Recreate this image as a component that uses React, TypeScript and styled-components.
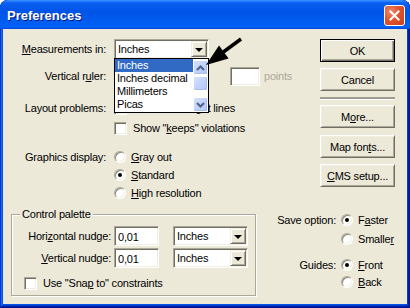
import React from "react";
import styled, { createGlobalStyle } from "styled-components";

const GlobalStyle = createGlobalStyle`
  html, body { margin: 0; padding: 0; background: #ffffff; }
  body { font-family: "Liberation Sans", Arial, sans-serif; font-size: 11px; letter-spacing: -0.2px; color: #000; }
  #root { width: 410px; height: 308px; }
`;

const Window = styled.div`
  width: 410px;
  height: 308px;
  box-sizing: border-box;
  display: flex;
  flex-direction: column;
  background: #0855dd;
  border-radius: 8px 8px 0 0;
  overflow: hidden;
  box-shadow: inset -1px -1px #00138c, inset 1px 1px #0831d9, inset -2px -2px #001ea0,
    inset 2px 2px #166aee, inset -3px -3px #003bda, inset 3px 3px #0855dd;
`;

const TitleBar = styled.div`
  height: 29px;
  flex: none;
  display: flex;
  align-items: center;
  justify-content: space-between;
  padding: 1px 5px 0 7px;
  box-sizing: border-box;
  border-radius: 8px 8px 0 0;
  background: linear-gradient(
    180deg,
    #3d95ff 0%,
    #0a5ff2 10%,
    #0054e6 40%,
    #005ff4 85%,
    #0062f8 93%,
    #0046d8 100%
  );
`;

const Title = styled.span`
  color: #fff;
  font-weight: bold;
  font-size: 13px;
  letter-spacing: 0;
  text-shadow: 1px 1px 0 #0a1883;
`;

const CloseButton = styled.div`
  width: 21px;
  height: 21px;
  box-sizing: border-box;
  border: 1px solid #fff;
  border-radius: 3px;
  display: flex;
  align-items: center;
  justify-content: center;
  background: radial-gradient(circle at 30% 30%, #eb8a6d 0%, #e0552f 45%, #c93d1a 100%);
`;

const Client = styled.div`
  flex: 1;
  margin: 0 3px 4px 3px;
  background: #ece9d8;
  position: relative;
  display: flex;
  flex-direction: column;
`;

const TopSection = styled.div`
  display: flex;
`;

const LeftForm = styled.div`
  flex: 1;
  display: flex;
  flex-direction: column;
`;

const FormRow = styled.div<{ $mt: number; $h: number }>`
  display: grid;
  grid-template-columns: 103px auto;
  column-gap: 8px;
  align-items: center;
  height: ${(p) => p.$h}px;
  margin-top: ${(p) => p.$mt}px;
`;

const FieldLabel = styled.span`
  text-align: right;
  white-space: nowrap;
`;

const Controls = styled.div`
  display: flex;
  align-items: center;
`;

const U = styled.span`
  text-decoration: underline;
`;

const sunken = `
  border: 1px solid;
  border-color: #aca899 #ffffff #ffffff #aca899;
  box-shadow: inset 1px 1px 0 #716f64, inset -1px -1px 0 #f1efe2;
`;

const Combo = styled.div<{ $w: number }>`
  position: relative;
  width: ${(p) => p.$w}px;
  height: 20px;
  box-sizing: border-box;
  ${sunken}
  background: #fff;
  display: flex;
  align-items: center;
  padding: 1px;
`;

const ComboText = styled.span`
  flex: 1;
  padding-left: 2px;
  white-space: nowrap;
`;

const DropButton = styled.span`
  width: 16px;
  height: 16px;
  box-sizing: border-box;
  background: #ece9d8;
  border: 1px solid;
  border-color: #f1efe2 #716f64 #716f64 #f1efe2;
  box-shadow: inset 1px 1px 0 #fff, inset -1px -1px 0 #aca899;
  display: flex;
  align-items: center;
  justify-content: center;
  &::after {
    content: "";
    width: 0;
    height: 0;
    border-left: 4px solid transparent;
    border-right: 4px solid transparent;
    border-top: 4px solid #000;
    margin-top: 1px;
  }
`;

const DropList = styled.div`
  position: absolute;
  left: -1px;
  top: 100%;
  width: 95px;
  height: 55px;
  box-sizing: border-box;
  border: 1px solid #000;
  background: #fff;
  display: flex;
  z-index: 2;
`;

const ListItems = styled.div`
  flex: 1;
  display: flex;
  flex-direction: column;
`;

const ListItem = styled.div<{ $sel?: boolean }>`
  height: 13px;
  line-height: 13px;
  padding-left: 2px;
  white-space: nowrap;
  background: ${(p) => (p.$sel ? "#316ac5" : "transparent")};
  color: ${(p) => (p.$sel ? "#fff" : "#000")};
`;

const ScrollBar = styled.div`
  width: 15px;
  flex: none;
  display: flex;
  flex-direction: column;
  justify-content: space-between;
  background: #fdfdfa;
`;

const ScrollPart = styled.div<{ $h: number }>`
  height: ${(p) => p.$h}px;
  box-sizing: border-box;
  border: 1px solid #fff;
  border-radius: 2px;
  background: linear-gradient(135deg, #d6e2fd 0%, #c2d3fb 50%, #b2c6f4 100%);
  box-shadow: inset -1px -1px 0 #a9bef0;
  display: flex;
  align-items: center;
  justify-content: center;
`;

const ScrollTrack = styled.div`
  flex: 1;
  display: flex;
  flex-direction: column;
  padding-top: 1px;
`;

const SunkenInput = styled.div<{ $w: number; $h: number }>`
  width: ${(p) => p.$w}px;
  height: ${(p) => p.$h}px;
  box-sizing: border-box;
  ${sunken}
  background: #fff;
  padding: 2px 0 0 3px;
  display: flex;
  align-items: center;
`;

const PointsBox = styled(SunkenInput)`
  margin-left: 21px;
`;

const Disabled = styled.span`
  color: #aca899;
  margin-left: 4px;
`;

const CheckLabel = styled.span`
  display: flex;
  align-items: center;
  gap: 6px;
  white-space: nowrap;
`;

const CheckBox = styled.span`
  width: 13px;
  height: 13px;
  flex: none;
  box-sizing: border-box;
  ${sunken}
  background: #fff;
`;

const RadioLabel = styled.span`
  display: flex;
  align-items: center;
  gap: 5px;
  white-space: nowrap;
`;

const RadioCircle = styled.span<{ $on?: boolean }>`
  width: 12px;
  height: 12px;
  flex: none;
  box-sizing: border-box;
  border-radius: 50%;
  background: #fff;
  border: 1px solid;
  border-color: #aca899 #ffffff #ffffff #aca899;
  box-shadow: inset 1px 1px 0 #8d8b80, inset -1px -1px 0 #f1efe2;
  display: flex;
  align-items: center;
  justify-content: center;
  &::after {
    content: "";
    width: 4px;
    height: 4px;
    border-radius: 50%;
    background: #000;
    display: ${(p) => (p.$on ? "block" : "none")};
  }
`;

const ButtonCol = styled.div`
  width: 75px;
  flex: none;
  margin-right: 12px;
  display: flex;
  flex-direction: column;
`;

const Button = styled.div<{ $mt: number; $default?: boolean }>`
  height: 23px;
  margin-top: ${(p) => p.$mt}px;
  box-sizing: border-box;
  background: #ece9d8;
  display: flex;
  align-items: center;
  justify-content: center;
  border: 1px solid;
  border-color: ${(p) => (p.$default ? "#000" : "#fff #716f64 #716f64 #fff")};
  box-shadow: ${(p) =>
    p.$default
      ? "inset 1px 1px 0 #fff, inset -1px -1px 0 #716f64, inset -2px -2px 0 #aca899"
      : "inset 1px 1px 0 #f1efe2, inset -1px -1px 0 #aca899"};
`;

const Separator = styled.div`
  height: 2px;
  margin-top: 6px;
  background: #9d9b8f;
  border-bottom: 1px solid #fff;
`;

const BottomSection = styled.div`
  display: flex;
  align-items: flex-start;
  margin-top: 8px;
`;

const GroupBox = styled.fieldset`
  margin: 0 0 0 8px;
  padding: 5px 0 0 0;
  width: 245px;
  height: 88px;
  box-sizing: border-box;
  min-width: 0;
  border: 1px solid #aca899;
  box-shadow: inset 1px 1px 0 #fff, 1px 1px 0 #fff;
  display: flex;
  flex-direction: column;
`;

const Legend = styled.legend`
  margin-left: 8px;
  padding: 0 2px;
  line-height: 13px;
  background: #ece9d8;
`;

const NudgeRow = styled.div<{ $mt: number }>`
  display: grid;
  grid-template-columns: 99px 45px 75px;
  column-gap: 3px;
  align-items: center;
  height: 20px;
  margin-top: ${(p) => p.$mt}px;
  & > :last-child {
    margin-left: 11px;
  }
`;

const SnapRow = styled.div`
  display: flex;
  align-items: center;
  height: 14px;
  margin: 8px 0 0 12px;
`;

const RightOpts = styled.div`
  margin-left: 19px;
  padding-top: 5px;
  display: flex;
  flex-direction: column;
`;

const OptRow = styled.div<{ $mt: number }>`
  display: grid;
  grid-template-columns: 61px auto;
  column-gap: 5px;
  align-items: center;
  height: 14px;
  margin-top: ${(p) => p.$mt}px;
`;

const ArrowMark = styled.svg`
  position: absolute;
  left: 197px;
  top: 6px;
  z-index: 3;
  pointer-events: none;
`;

const Chevron = ({ up }: { up?: boolean }) => (
  <svg width="9" height="6" viewBox="0 0 9 6">
    <polyline
      points={up ? "1,5 4.5,1.5 8,5" : "1,1 4.5,4.5 8,1"}
      fill="none"
      stroke="#4d6185"
      strokeWidth="2"
    />
  </svg>
);

export default function App() {
  return (
    <>
      <GlobalStyle />
      <Window>
        <TitleBar>
          <Title>Preferences</Title>
          <CloseButton aria-label="Close">
            <svg width="11" height="11" viewBox="0 0 11 11">
              <path d="M1.5 1.5L9.5 9.5M9.5 1.5L1.5 9.5" stroke="#fff" strokeWidth="2" strokeLinecap="square" />
            </svg>
          </CloseButton>
        </TitleBar>
        <Client>
          <TopSection>
            <LeftForm>
              <FormRow $mt={10} $h={20}>
                <FieldLabel>
                  <U>M</U>easurements in:
                </FieldLabel>
                <Controls>
                  <Combo $w={95}>
                    <ComboText>Inches</ComboText>
                    <DropButton />
                    <DropList>
                      <ListItems>
                        <ListItem $sel>Inches</ListItem>
                        <ListItem>Inches decimal</ListItem>
                        <ListItem>Millimeters</ListItem>
                        <ListItem>Picas</ListItem>
                      </ListItems>
                      <ScrollBar>
                        <ScrollTrack>
                          <ScrollPart $h={15}>
                            <Chevron up />
                          </ScrollPart>
                          <ScrollPart $h={15} style={{ marginTop: 1 }} />
                        </ScrollTrack>
                        <ScrollPart $h={15}>
                          <Chevron />
                        </ScrollPart>
                      </ScrollBar>
                    </DropList>
                  </Combo>
                </Controls>
              </FormRow>
              <FormRow $mt={7} $h={20}>
                <FieldLabel>
                  Vertical r<U>u</U>ler:
                </FieldLabel>
                <Controls>
                  <Combo $w={95}>
                    <ComboText />
                    <DropButton />
                  </Combo>
                  <PointsBox $w={30} $h={19} />
                  <Disabled>points</Disabled>
                </Controls>
              </FormRow>
              <FormRow $mt={15} $h={14}>
                <FieldLabel>Layout problems:</FieldLabel>
                <CheckLabel>
                  <CheckBox />
                  Show loose/tight lines
                </CheckLabel>
              </FormRow>
              <FormRow $mt={6} $h={14}>
                <span />
                <CheckLabel>
                  <CheckBox />
                  <span>
                    Show "<U>k</U>eeps" violations
                  </span>
                </CheckLabel>
              </FormRow>
              <FormRow $mt={15} $h={14}>
                <FieldLabel>Graphics display:</FieldLabel>
                <RadioLabel>
                  <RadioCircle />
                  <span>
                    <U>G</U>ray out
                  </span>
                </RadioLabel>
              </FormRow>
              <FormRow $mt={4} $h={14}>
                <span />
                <RadioLabel>
                  <RadioCircle $on />
                  <span>
                    <U>S</U>tandard
                  </span>
                </RadioLabel>
              </FormRow>
              <FormRow $mt={4} $h={14}>
                <span />
                <RadioLabel>
                  <RadioCircle />
                  <span>
                    <U>H</U>igh resolution
                  </span>
                </RadioLabel>
              </FormRow>
            </LeftForm>
            <ButtonCol>
              <Button $mt={10} $default>
                OK
              </Button>
              <Button $mt={6}>Cancel</Button>
              <Separator />
              <Button $mt={5}>
                <span>
                  M<U>o</U>re...
                </span>
              </Button>
              <Button $mt={7}>
                <span>
                  Map fon<U>t</U>s...
                </span>
              </Button>
              <Button $mt={6}>
                <span>
                  <U>C</U>MS setup...
                </span>
              </Button>
            </ButtonCol>
          </TopSection>
          <BottomSection>
            <GroupBox>
              <Legend>Control palette</Legend>
              <NudgeRow $mt={0}>
                <FieldLabel>
                  Hori<U>z</U>ontal nudge:
                </FieldLabel>
                <SunkenInput $w={45} $h={20}>0,01</SunkenInput>
                <Combo $w={75}>
                  <ComboText>Inches</ComboText>
                  <DropButton />
                </Combo>
              </NudgeRow>
              <NudgeRow $mt={2}>
                <FieldLabel>
                  <U>V</U>ertical nudge:
                </FieldLabel>
                <SunkenInput $w={45} $h={20}>0,01</SunkenInput>
                <Combo $w={75}>
                  <ComboText>Inches</ComboText>
                  <DropButton />
                </Combo>
              </NudgeRow>
              <SnapRow>
                <CheckLabel>
                  <CheckBox />
                  <span>
                    Use "Sna<U>p</U> to" constraints
                  </span>
                </CheckLabel>
              </SnapRow>
            </GroupBox>
            <RightOpts>
              <OptRow $mt={0}>
                <FieldLabel>Save option:</FieldLabel>
                <RadioLabel>
                  <RadioCircle $on />
                  <span>
                    F<U>a</U>ster
                  </span>
                </RadioLabel>
              </OptRow>
              <OptRow $mt={5}>
                <span />
                <RadioLabel>
                  <RadioCircle />
                  <span>
                    Smalle<U>r</U>
                  </span>
                </RadioLabel>
              </OptRow>
              <OptRow $mt={12}>
                <FieldLabel>Guides:</FieldLabel>
                <RadioLabel>
                  <RadioCircle $on />
                  <span>
                    <U>F</U>ront
                  </span>
                </RadioLabel>
              </OptRow>
              <OptRow $mt={3}>
                <span />
                <RadioLabel>
                  <RadioCircle />
                  <span>
                    <U>B</U>ack
                  </span>
                </RadioLabel>
              </OptRow>
            </RightOpts>
          </BottomSection>
          <ArrowMark width="45" height="35" viewBox="0 0 45 35">
            <line x1="41" y1="4" x2="22" y2="18" stroke="#000" strokeWidth="3.5" />
            <polygon points="6,30 28.6,23.4 19,10.4" fill="#000" />
          </ArrowMark>
        </Client>
      </Window>
    </>
  );
}
